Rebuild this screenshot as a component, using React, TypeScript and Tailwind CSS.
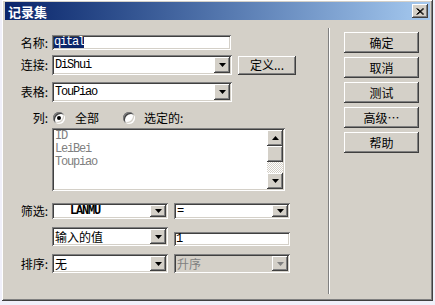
import React from "react";

const sunken =
  "shadow-[inset_1px_1px_#808080,inset_-1px_-1px_#ffffff,inset_2px_2px_#404040,inset_-2px_-2px_#d4d0c8]";
const raised =
  "shadow-[inset_-1px_-1px_#404040,inset_1px_1px_#ffffff,inset_-2px_-2px_#808080,inset_2px_2px_#d4d0c8]";
const cjk = "font-['Noto_Sans_CJK_SC',sans-serif]";
const mono = "font-['Liberation_Mono','Noto_Sans_CJK_SC',monospace] tracking-[-1.2px]";

const Arrow = ({ up = false, gray = false }: { up?: boolean; gray?: boolean }) => (
  <svg width="7" height="4" viewBox="0 0 7 4">
    <polygon
      points={up ? "0,4 7,4 3.5,0" : "0,0 7,0 3.5,4"}
      fill={gray ? "#808080" : "#000000"}
    />
  </svg>
);

interface ComboProps {
  className: string;
  children?: React.ReactNode;
  disabled?: boolean;
}

const Combo = ({ className, children, disabled }: ComboProps) => (
  <div
    className={`flex p-[2px] ${sunken} ${disabled ? "bg-[#d4d0c8]" : "bg-white"} ${className}`}
  >
    <div className="flex-1 flex items-center pl-[1px] overflow-hidden whitespace-nowrap">
      {children}
    </div>
    <div className={`w-[16px] bg-[#d4d0c8] flex items-center justify-center ${raised}`}>
      <Arrow gray={disabled} />
    </div>
  </div>
);

const Radio = ({ checked }: { checked?: boolean }) => (
  <div
    className={`w-[12px] h-[12px] rounded-full bg-white flex items-center justify-center ${sunken}`}
  >
    {checked && <div className="w-[4px] h-[4px] rounded-full bg-black" />}
  </div>
);

const Label = ({ text }: { text: string }) => (
  <div className={`w-[43px] text-right text-[12px] leading-none text-black ${cjk}`}>{text}</div>
);

const SideButton = ({ text }: { text: string }) => (
  <div
    className={`w-[75px] h-[21px] bg-[#d4d0c8] flex items-center justify-center text-[12px] text-black ${cjk} ${raised}`}
  >
    {text}
  </div>
);

export default function App() {
  return (
    <div className="w-[435px] h-[305px] bg-[#f0f0fa] overflow-hidden">
      <div
        className={`ml-[2px] w-[431px] h-[301px] bg-[#d4d0c8] pt-[2px] px-[3px] pb-[3px] flex flex-col ${raised}`}
      >
        {/* Title bar */}
        <div className="h-[18px] flex items-center justify-between bg-gradient-to-r from-[#0a246a] to-[#a6caf0]">
          <span className={`pl-[3px] text-[13px] font-bold text-white leading-none ${cjk}`}>记录集</span>
          <div
            className={`mr-[2px] w-[16px] h-[14px] bg-[#d4d0c8] flex items-center justify-center ${raised}`}
          >
            <svg width="8" height="7" viewBox="0 0 8 7">
              <path d="M0.5 0.5 L7 6.5 M1.5 0.5 L8 6.5 M7 0.5 L0.5 6.5 M8 0.5 L1.5 6.5" stroke="#000" strokeWidth="1" />
            </svg>
          </div>
        </div>

        {/* Body */}
        <div className="flex-1 flex">
          <div className="w-[323px] flex flex-col">
            {/* 名称 */}
            <div className="mt-[15px] h-[15px] flex items-center">
              <Label text="名称:" />
              <div className={`ml-[4px] w-[179px] h-[15px] bg-white p-[2px] flex items-center ${sunken}`}>
                <span className={`bg-[#0a246a] text-white text-[12px] leading-[11px] ${mono}`}>qital</span>
              </div>
            </div>

            {/* 连接 */}
            <div className="mt-[5px] h-[20px] flex items-center">
              <Label text="连接:" />
              <Combo className="ml-[4px] w-[180px] h-[20px]">
                <span className={`text-[12px] text-black ${mono}`}>DiShui</span>
              </Combo>
              <div
                className={`ml-[6px] w-[58px] h-[19px] bg-[#d4d0c8] flex items-center justify-center text-[12px] text-black ${cjk} ${raised}`}
              >
                定义...
              </div>
            </div>

            {/* 表格 */}
            <div className="mt-[7px] h-[20px] flex items-center">
              <Label text="表格:" />
              <Combo className="ml-[4px] w-[180px] h-[20px]">
                <span className={`text-[12px] text-black ${mono}`}>TouPiao</span>
              </Combo>
            </div>

            {/* 列 */}
            <div className="mt-[9px] h-[13px] flex items-center">
              <Label text="列:" />
              <div className="ml-[5px]">
                <Radio checked />
              </div>
              <span className={`ml-[10px] text-[12px] leading-none text-black ${cjk}`}>全部</span>
              <div className="ml-[24px]">
                <Radio />
              </div>
              <span className={`ml-[9px] text-[12px] leading-none text-black ${cjk}`}>选定的:</span>
            </div>

            {/* column list */}
            <div className={`mt-[4px] ml-[47px] w-[233px] h-[63px] bg-white p-[2px] flex ${sunken}`}>
              <div className={`flex-1 pl-[1px] text-[12px] leading-[13px] text-[#808080] overflow-hidden ${mono}`}>
                <div>ID</div>
                <div>LeiBei</div>
                <div>Toupiao</div>
              </div>
              <div className="w-[16px] flex flex-col">
                <div className={`h-[16px] bg-[#d4d0c8] flex items-center justify-center ${raised}`}>
                  <Arrow up />
                </div>
                <div className={`h-[16px] bg-[#d4d0c8] ${raised}`} />
                <div className="flex-1 bg-[repeating-conic-gradient(#d4d0c8_0%_25%,#ffffff_0%_50%)] bg-size-[2px_2px]" />
                <div className={`h-[16px] bg-[#d4d0c8] flex items-center justify-center ${raised}`}>
                  <Arrow />
                </div>
              </div>
            </div>

            {/* 筛选 */}
            <div className="mt-[12px] h-[16px] flex items-center">
              <Label text="筛选:" />
              <Combo className="ml-[4px] w-[116px] h-[16px]">
                <span className={`pl-[15px] text-[12px] font-bold text-black ${mono}`}>LANMU</span>
              </Combo>
              <Combo className="ml-[6px] w-[116px] h-[16px]">
                <span className={`text-[12px] text-black ${mono}`}>=</span>
              </Combo>
            </div>

            <div className="mt-[8px] h-[19px] flex items-start">
              <div className="w-[43px]" />
              <Combo className="ml-[4px] w-[116px] h-[19px]">
                <span className={`text-[12px] text-black ${cjk}`}>输入的值</span>
              </Combo>
              <div className={`ml-[6px] mt-[5px] w-[116px] h-[14px] bg-white p-[2px] flex items-center ${sunken}`}>
                <span className={`text-[12px] leading-none text-black ${mono}`}>1</span>
              </div>
            </div>

            {/* 排序 */}
            <div className="mt-[8px] h-[19px] flex items-center">
              <Label text="排序:" />
              <Combo className="ml-[4px] w-[116px] h-[19px]">
                <span className={`text-[12px] text-black ${cjk}`}>无</span>
              </Combo>
              <Combo className="ml-[6px] w-[116px] h-[19px]" disabled>
                <span className={`text-[12px] text-[#808080] ${cjk}`}>升序</span>
              </Combo>
            </div>
          </div>

          {/* separator */}
          <div className="mt-[8px] mb-[4px] w-[2px] border-l border-l-[#808080] border-r border-r-white" />

          {/* buttons */}
          <div className="pl-[14px] pt-[12px] flex flex-col gap-[4px]">
            <SideButton text="确定" />
            <SideButton text="取消" />
            <SideButton text="测试" />
            <SideButton text="高级⋯" />
            <SideButton text="帮助" />
          </div>
        </div>
      </div>
    </div>
  );
}
